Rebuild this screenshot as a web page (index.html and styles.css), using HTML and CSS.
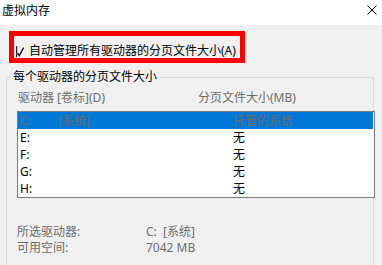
FILE: index.html
```html
<!DOCTYPE html>
<html lang="zh-CN">
<head>
<meta charset="utf-8">
<title>虚拟内存</title>
<link rel="stylesheet" href="styles.css">
</head>
<body>
<div class="titlebar">
  <span class="title">虚拟内存</span>
  <svg class="close" width="10" height="10" viewBox="0 0 10 10"><path d="M0.5 0.5 L9.5 9.5 M9.5 0.5 L0.5 9.5" stroke="#000" stroke-width="1" fill="none"/></svg>
</div>
<div class="highlight">
  <svg class="check" width="12" height="13" viewBox="0 0 12 13"><rect x="1" y="1" width="1.2" height="11" fill="#222"/><path d="M2.6 8 L4.2 10.6 L8.6 2.6" stroke="#111" stroke-width="1.3" fill="none"/></svg>
  <span class="check-label">自动管理所有驱动器的分页文件大小(A)</span>
</div>
<fieldset class="group">
  <legend class="legend">每个驱动器的分页文件大小</legend>
  <div class="group-body">
    <div class="head">
      <span>驱动器 [卷标](D)</span>
      <span>分页文件大小(MB)</span>
    </div>
    <div class="list">
      <div class="row selected"><span>C:</span><span>[系统]</span><span>托管的系统</span></div>
      <div class="row"><span>E:</span><span></span><span>无</span></div>
      <div class="row"><span>F:</span><span></span><span>无</span></div>
      <div class="row"><span>G:</span><span></span><span>无</span></div>
      <div class="row"><span>H:</span><span></span><span>无</span></div>
    </div>
    <div class="info">
      <span>所选驱动器:</span><span>C:&nbsp; [系统]</span>
      <span>可用空间:</span><span>7042 MB</span>
    </div>
  </div>
</fieldset>
</body>
</html>
```
FILE: styles.css
```css
html, body {
  margin: 0;
  padding: 0;
  overflow: hidden;
  height: 265px;
}
body {
  background: #f0f0f0;
  font-family: "Noto Sans", "Noto Sans CJK SC", sans-serif;
  font-size: 12px;
  color: #000;
}
.titlebar {
  height: 25px;
  background: #fff;
  display: flex;
  align-items: flex-start;
  justify-content: space-between;
  padding-left: 2px;
  padding-right: 5px;
}
.title {
  line-height: 22px;
}
.close {
  margin-top: 5px;
}
.highlight {
  margin: 6px 0 0 9px;
  width: 226px;
  height: 22px;
  border: 5px solid #ff0000;
  display: flex;
  align-items: flex-start;
}
.check {
  display: block;
  margin: 9px 0 0 1px;
  flex: none;
}
.check-label {
  margin-left: 2px;
  margin-top: 8px;
  line-height: 14px;
  white-space: nowrap;
}
.group {
  margin: 7px 8px 0 6px;
  padding: 0 0 40px 0;
  border: 1px solid #dcdcdc;
  min-width: 0;
}
.legend {
  margin-left: 4px;
  padding: 0 2px;
  line-height: 14px;
}
.group-body {
  padding-left: 10px;
}
.head {
  display: grid;
  grid-template-columns: 180px 1fr;
  margin-top: 7px;
  padding-left: 1px;
  line-height: 14px;
  color: #6d6d6d;
}
.list {
  margin: 6px -2px 0 0;
  border: 1px solid #7a7a7a;
  background: #fff;
}
.row {
  display: grid;
  grid-template-columns: 38px 175px 1fr;
  height: 17px;
  line-height: 17px;
  padding-left: 2px;
  margin-right: 1px;
  white-space: nowrap;
}
.row.selected {
  background: #0078d7;
  color: #6d6d6d;
}
.info {
  display: grid;
  grid-template-columns: 129px 1fr;
  margin-top: 26px;
  line-height: 16px;
  color: #6d6d6d;
}
```
